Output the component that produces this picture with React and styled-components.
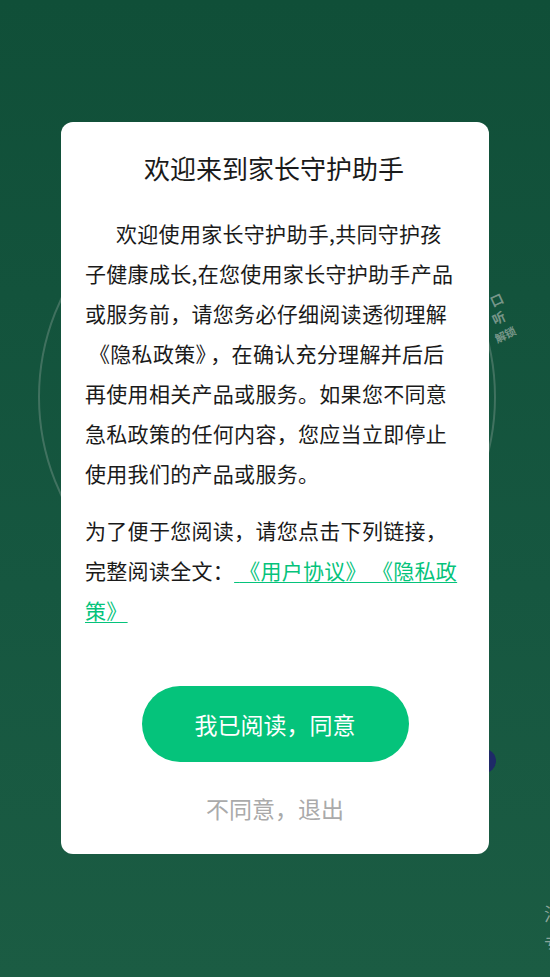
import React from 'react';
import styled, { createGlobalStyle } from 'styled-components';

const GlobalStyle = createGlobalStyle`
  html, body {
    margin: 0;
    padding: 0;
  }
  body {
    font-family: "Noto Sans CJK SC", "Noto Sans", sans-serif;
    -webkit-font-smoothing: antialiased;
  }
  * {
    box-sizing: border-box;
  }
`;

const Page = styled.div`
  position: relative;
  width: 100%;
  min-height: 100vh;
  overflow: hidden;
  background: linear-gradient(180deg, #104f38 0%, #165740 60%, #1b5c43 100%);
  padding-top: 168px;
`;

const Ring = styled.div`
  position: relative;
  width: 458px;
  height: 458px;
  margin-left: 38px;
  border-radius: 50%;
  border: 2px solid rgba(150, 170, 160, 0.35);
`;

const RingLabel = styled.span`
  position: absolute;
  font-size: ${props => props.size || 14}px;
  font-weight: 700;
  color: rgba(165, 180, 172, 0.7);
  transform: rotate(${props => props.angle}deg);
  white-space: nowrap;
`;

const Dot = styled.div`
  width: 24px;
  height: 24px;
  border-radius: 50%;
  background: #1e2a68;
  margin: 123px 0 0 472px;
`;

const Corner = styled.div`
  display: flex;
  flex-direction: column;
  align-items: flex-start;
  margin: 125px 0 0 544px;
  font-size: 18px;
  line-height: 30px;
  color: rgba(170, 185, 178, 0.8);
`;

const Mask = styled.div`
  position: fixed;
  inset: 0;
  display: flex;
  justify-content: center;
  align-items: flex-start;
  padding-top: 122px;
`;

const Dialog = styled.div`
  width: 428px;
  background: #ffffff;
  border-radius: 12px;
  padding: 28px 24px 31px;
  display: flex;
  flex-direction: column;
`;

const Title = styled.h2`
  margin: 0 0 0 -2px;
  font-size: 26px;
  line-height: 36px;
  font-weight: 400;
  color: #1a1a1a;
  text-align: center;
`;

const Paragraph = styled.p`
  margin: ${props => props.gap || 0}px 0 0;
  font-size: 21px;
  line-height: 40px;
  letter-spacing: 0.3px;
  color: #1a1a1a;
  white-space: nowrap;
  text-indent: ${props => (props.indent ? '31px' : '0')};
`;

const Quote = styled.span`
  padding: 0 ${props => props.pad || 0}px;
`;

const Link = styled.a`
  color: #05c37b;
  text-decoration: underline;
  text-decoration-thickness: 1px;
  text-underline-offset: 3px;
  cursor: pointer;
`;

const AgreeButton = styled.button`
  align-self: center;
  width: 267px;
  height: 76px;
  margin-top: 56px;
  border: none;
  border-radius: 38px;
  background: #05c37b;
  color: #ffffff;
  font-family: inherit;
  font-size: 23px;
  cursor: pointer;
`;

const DeclineButton = styled.button`
  align-self: center;
  margin-top: 31px;
  padding: 0;
  border: none;
  background: none;
  color: #aaaaaa;
  font-family: inherit;
  font-size: 23px;
  line-height: 30px;
  cursor: pointer;
`;

const App = () => {
  return (
    <>
      <GlobalStyle />
      <Page>
        <Ring>
          <RingLabel angle={-25} size={13} style={{ left: 450, top: 120 }}>
            口
          </RingLabel>
          <RingLabel angle={-25} size={13} style={{ left: 452, top: 138 }}>
            听
          </RingLabel>
          <RingLabel angle={-25} size={11} style={{ left: 454, top: 156 }}>
            解锁
          </RingLabel>
        </Ring>
        <Dot />
        <Corner>
          <span>法</span>
          <span>专</span>
        </Corner>
      </Page>

      <Mask>
        <Dialog>
          <Title>欢迎来到家长守护助手</Title>
          <Paragraph indent gap={27}>
            欢迎使用家长守护助手,共同守护孩
            <br />
            子健康成长,在您使用家长守护助手产品
            <br />
            或服务前，请您务必仔细阅读透彻理解
            <br />
            <Quote pad={4}>《隐私政策》</Quote>，在确认充分理解并后后
            <br />
            再使用相关产品或服务。如果您不同意
            <br />
            急私政策的任何内容，您应当立即停止
            <br />
            使用我们的产品或服务。
          </Paragraph>
          <Paragraph gap={17}>
            为了便于您阅读，请您点击下列链接，
            <br />
            完整阅读全文：
            <Link>
              {' '}《用户协议》 《隐私政
              <br />
              策》{' '}
            </Link>
          </Paragraph>
          <AgreeButton>我已阅读，同意</AgreeButton>
          <DeclineButton>不同意，退出</DeclineButton>
        </Dialog>
      </Mask>
    </>
  );
};

export default App;
